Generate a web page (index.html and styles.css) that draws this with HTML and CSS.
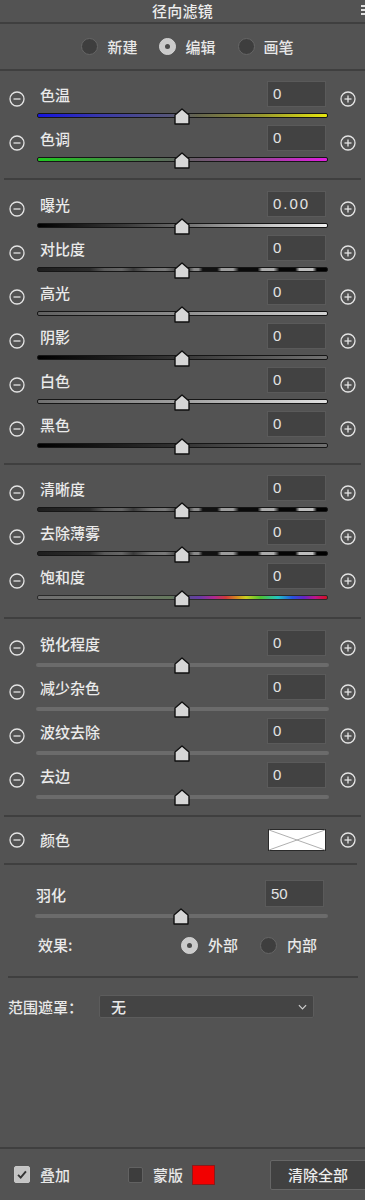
FILE: index.html
```html
<!DOCTYPE html>
<html lang="zh">
<head>
<meta charset="utf-8">
<title>径向滤镜</title>
<link rel="stylesheet" href="styles.css">
</head>
<body>
<div class="panel">
  <header class="titlebar">
    <span class="title">径向滤镜</span>
    <span class="menu"></span>
  </header>

  <div class="modes">
    <label class="radio-item"><span class="radio"></span><span>新建</span></label>
    <label class="radio-item"><span class="radio on"></span><span>编辑</span></label>
    <label class="radio-item"><span class="radio"></span><span>画笔</span></label>
  </div>

  <section class="group g1">
    <div class="row">
      <svg class="pm minus" viewBox="0 0 16 16"><circle cx="8" cy="8" r="7" /><line x1="4.5" y1="8" x2="11.5" y2="8" /></svg>
      <div class="mid">
        <div class="top"><span class="label">色温</span><span class="field">0</span></div>
        <div class="slider"><div class="track t-temp"></div><svg class="thumb" viewBox="0 0 16 17"><path d="M8 1 L15 7 L15 16 L1 16 L1 7 Z" /></svg></div>
      </div>
      <svg class="pm plus" viewBox="0 0 16 16"><circle cx="8" cy="8" r="7" /><line x1="4.5" y1="8" x2="11.5" y2="8" /><line x1="8" y1="4.5" x2="8" y2="11.5" /></svg>
    </div>
    <div class="row">
      <svg class="pm minus" viewBox="0 0 16 16"><circle cx="8" cy="8" r="7" /><line x1="4.5" y1="8" x2="11.5" y2="8" /></svg>
      <div class="mid">
        <div class="top"><span class="label">色调</span><span class="field">0</span></div>
        <div class="slider"><div class="track t-tint"></div><svg class="thumb" viewBox="0 0 16 17"><path d="M8 1 L15 7 L15 16 L1 16 L1 7 Z" /></svg></div>
      </div>
      <svg class="pm plus" viewBox="0 0 16 16"><circle cx="8" cy="8" r="7" /><line x1="4.5" y1="8" x2="11.5" y2="8" /><line x1="8" y1="4.5" x2="8" y2="11.5" /></svg>
    </div>
  </section>

  <section class="group g2">
    <div class="row">
      <svg class="pm minus" viewBox="0 0 16 16"><circle cx="8" cy="8" r="7" /><line x1="4.5" y1="8" x2="11.5" y2="8" /></svg>
      <div class="mid">
        <div class="top"><span class="label">曝光</span><span class="field wide">0.00</span></div>
        <div class="slider"><div class="track t-exp"></div><svg class="thumb" viewBox="0 0 16 17"><path d="M8 1 L15 7 L15 16 L1 16 L1 7 Z" /></svg></div>
      </div>
      <svg class="pm plus" viewBox="0 0 16 16"><circle cx="8" cy="8" r="7" /><line x1="4.5" y1="8" x2="11.5" y2="8" /><line x1="8" y1="4.5" x2="8" y2="11.5" /></svg>
    </div>
    <div class="row">
      <svg class="pm minus" viewBox="0 0 16 16"><circle cx="8" cy="8" r="7" /><line x1="4.5" y1="8" x2="11.5" y2="8" /></svg>
      <div class="mid">
        <div class="top"><span class="label">对比度</span><span class="field">0</span></div>
        <div class="slider"><div class="track t-dash"></div><svg class="thumb" viewBox="0 0 16 17"><path d="M8 1 L15 7 L15 16 L1 16 L1 7 Z" /></svg></div>
      </div>
      <svg class="pm plus" viewBox="0 0 16 16"><circle cx="8" cy="8" r="7" /><line x1="4.5" y1="8" x2="11.5" y2="8" /><line x1="8" y1="4.5" x2="8" y2="11.5" /></svg>
    </div>
    <div class="row">
      <svg class="pm minus" viewBox="0 0 16 16"><circle cx="8" cy="8" r="7" /><line x1="4.5" y1="8" x2="11.5" y2="8" /></svg>
      <div class="mid">
        <div class="top"><span class="label">高光</span><span class="field">0</span></div>
        <div class="slider"><div class="track t-high"></div><svg class="thumb" viewBox="0 0 16 17"><path d="M8 1 L15 7 L15 16 L1 16 L1 7 Z" /></svg></div>
      </div>
      <svg class="pm plus" viewBox="0 0 16 16"><circle cx="8" cy="8" r="7" /><line x1="4.5" y1="8" x2="11.5" y2="8" /><line x1="8" y1="4.5" x2="8" y2="11.5" /></svg>
    </div>
    <div class="row">
      <svg class="pm minus" viewBox="0 0 16 16"><circle cx="8" cy="8" r="7" /><line x1="4.5" y1="8" x2="11.5" y2="8" /></svg>
      <div class="mid">
        <div class="top"><span class="label">阴影</span><span class="field">0</span></div>
        <div class="slider"><div class="track t-shadow"></div><svg class="thumb" viewBox="0 0 16 17"><path d="M8 1 L15 7 L15 16 L1 16 L1 7 Z" /></svg></div>
      </div>
      <svg class="pm plus" viewBox="0 0 16 16"><circle cx="8" cy="8" r="7" /><line x1="4.5" y1="8" x2="11.5" y2="8" /><line x1="8" y1="4.5" x2="8" y2="11.5" /></svg>
    </div>
    <div class="row">
      <svg class="pm minus" viewBox="0 0 16 16"><circle cx="8" cy="8" r="7" /><line x1="4.5" y1="8" x2="11.5" y2="8" /></svg>
      <div class="mid">
        <div class="top"><span class="label">白色</span><span class="field">0</span></div>
        <div class="slider"><div class="track t-white"></div><svg class="thumb" viewBox="0 0 16 17"><path d="M8 1 L15 7 L15 16 L1 16 L1 7 Z" /></svg></div>
      </div>
      <svg class="pm plus" viewBox="0 0 16 16"><circle cx="8" cy="8" r="7" /><line x1="4.5" y1="8" x2="11.5" y2="8" /><line x1="8" y1="4.5" x2="8" y2="11.5" /></svg>
    </div>
    <div class="row">
      <svg class="pm minus" viewBox="0 0 16 16"><circle cx="8" cy="8" r="7" /><line x1="4.5" y1="8" x2="11.5" y2="8" /></svg>
      <div class="mid">
        <div class="top"><span class="label">黑色</span><span class="field">0</span></div>
        <div class="slider"><div class="track t-black"></div><svg class="thumb" viewBox="0 0 16 17"><path d="M8 1 L15 7 L15 16 L1 16 L1 7 Z" /></svg></div>
      </div>
      <svg class="pm plus" viewBox="0 0 16 16"><circle cx="8" cy="8" r="7" /><line x1="4.5" y1="8" x2="11.5" y2="8" /><line x1="8" y1="4.5" x2="8" y2="11.5" /></svg>
    </div>
  </section>

  <section class="group g3">
    <div class="row">
      <svg class="pm minus" viewBox="0 0 16 16"><circle cx="8" cy="8" r="7" /><line x1="4.5" y1="8" x2="11.5" y2="8" /></svg>
      <div class="mid">
        <div class="top"><span class="label">清晰度</span><span class="field">0</span></div>
        <div class="slider"><div class="track t-dash"></div><svg class="thumb" viewBox="0 0 16 17"><path d="M8 1 L15 7 L15 16 L1 16 L1 7 Z" /></svg></div>
      </div>
      <svg class="pm plus" viewBox="0 0 16 16"><circle cx="8" cy="8" r="7" /><line x1="4.5" y1="8" x2="11.5" y2="8" /><line x1="8" y1="4.5" x2="8" y2="11.5" /></svg>
    </div>
    <div class="row">
      <svg class="pm minus" viewBox="0 0 16 16"><circle cx="8" cy="8" r="7" /><line x1="4.5" y1="8" x2="11.5" y2="8" /></svg>
      <div class="mid">
        <div class="top"><span class="label">去除薄雾</span><span class="field">0</span></div>
        <div class="slider"><div class="track t-dash"></div><svg class="thumb" viewBox="0 0 16 17"><path d="M8 1 L15 7 L15 16 L1 16 L1 7 Z" /></svg></div>
      </div>
      <svg class="pm plus" viewBox="0 0 16 16"><circle cx="8" cy="8" r="7" /><line x1="4.5" y1="8" x2="11.5" y2="8" /><line x1="8" y1="4.5" x2="8" y2="11.5" /></svg>
    </div>
    <div class="row">
      <svg class="pm minus" viewBox="0 0 16 16"><circle cx="8" cy="8" r="7" /><line x1="4.5" y1="8" x2="11.5" y2="8" /></svg>
      <div class="mid">
        <div class="top"><span class="label">饱和度</span><span class="field">0</span></div>
        <div class="slider"><div class="track t-sat"></div><svg class="thumb" viewBox="0 0 16 17"><path d="M8 1 L15 7 L15 16 L1 16 L1 7 Z" /></svg></div>
      </div>
      <svg class="pm plus" viewBox="0 0 16 16"><circle cx="8" cy="8" r="7" /><line x1="4.5" y1="8" x2="11.5" y2="8" /><line x1="8" y1="4.5" x2="8" y2="11.5" /></svg>
    </div>
  </section>

  <section class="group g4">
    <div class="row">
      <svg class="pm minus" viewBox="0 0 16 16"><circle cx="8" cy="8" r="7" /><line x1="4.5" y1="8" x2="11.5" y2="8" /></svg>
      <div class="mid">
        <div class="top"><span class="label">锐化程度</span><span class="field">0</span></div>
        <div class="slider"><div class="track plain"></div><svg class="thumb" viewBox="0 0 16 17"><path d="M8 1 L15 7 L15 16 L1 16 L1 7 Z" /></svg></div>
      </div>
      <svg class="pm plus" viewBox="0 0 16 16"><circle cx="8" cy="8" r="7" /><line x1="4.5" y1="8" x2="11.5" y2="8" /><line x1="8" y1="4.5" x2="8" y2="11.5" /></svg>
    </div>
    <div class="row">
      <svg class="pm minus" viewBox="0 0 16 16"><circle cx="8" cy="8" r="7" /><line x1="4.5" y1="8" x2="11.5" y2="8" /></svg>
      <div class="mid">
        <div class="top"><span class="label">减少杂色</span><span class="field">0</span></div>
        <div class="slider"><div class="track plain"></div><svg class="thumb" viewBox="0 0 16 17"><path d="M8 1 L15 7 L15 16 L1 16 L1 7 Z" /></svg></div>
      </div>
      <svg class="pm plus" viewBox="0 0 16 16"><circle cx="8" cy="8" r="7" /><line x1="4.5" y1="8" x2="11.5" y2="8" /><line x1="8" y1="4.5" x2="8" y2="11.5" /></svg>
    </div>
    <div class="row">
      <svg class="pm minus" viewBox="0 0 16 16"><circle cx="8" cy="8" r="7" /><line x1="4.5" y1="8" x2="11.5" y2="8" /></svg>
      <div class="mid">
        <div class="top"><span class="label">波纹去除</span><span class="field">0</span></div>
        <div class="slider"><div class="track plain"></div><svg class="thumb" viewBox="0 0 16 17"><path d="M8 1 L15 7 L15 16 L1 16 L1 7 Z" /></svg></div>
      </div>
      <svg class="pm plus" viewBox="0 0 16 16"><circle cx="8" cy="8" r="7" /><line x1="4.5" y1="8" x2="11.5" y2="8" /><line x1="8" y1="4.5" x2="8" y2="11.5" /></svg>
    </div>
    <div class="row">
      <svg class="pm minus" viewBox="0 0 16 16"><circle cx="8" cy="8" r="7" /><line x1="4.5" y1="8" x2="11.5" y2="8" /></svg>
      <div class="mid">
        <div class="top"><span class="label">去边</span><span class="field">0</span></div>
        <div class="slider"><div class="track plain"></div><svg class="thumb" viewBox="0 0 16 17"><path d="M8 1 L15 7 L15 16 L1 16 L1 7 Z" /></svg></div>
      </div>
      <svg class="pm plus" viewBox="0 0 16 16"><circle cx="8" cy="8" r="7" /><line x1="4.5" y1="8" x2="11.5" y2="8" /><line x1="8" y1="4.5" x2="8" y2="11.5" /></svg>
    </div>
  </section>

  <section class="color-row">
    <svg class="pm minus" viewBox="0 0 16 16"><circle cx="8" cy="8" r="7" /><line x1="4.5" y1="8" x2="11.5" y2="8" /></svg>
    <div class="mid color-mid">
      <span class="label">颜色</span>
      <svg class="swatch" viewBox="0 0 58 22" preserveAspectRatio="none"><rect x="0.5" y="0.5" width="57" height="21" /><line x1="1" y1="1" x2="57" y2="21" /><line x1="1" y1="21" x2="57" y2="1" /></svg>
    </div>
    <svg class="pm plus" viewBox="0 0 16 16"><circle cx="8" cy="8" r="7" /><line x1="4.5" y1="8" x2="11.5" y2="8" /><line x1="8" y1="4.5" x2="8" y2="11.5" /></svg>
  </section>

  <section class="feather">
    <div class="top ftop"><span class="label">羽化</span><span class="field">50</span></div>
    <div class="slider fslider"><div class="track plain"></div><svg class="thumb" viewBox="0 0 16 17"><path d="M8 1 L15 7 L15 16 L1 16 L1 7 Z" /></svg></div>
    <div class="effect">
      <span class="label">效果:</span>
      <div class="effect-opts">
        <label class="radio-item"><span class="radio on"></span><span>外部</span></label>
        <label class="radio-item"><span class="radio"></span><span>内部</span></label>
      </div>
    </div>
  </section>

  <section class="range">
    <span class="range-label">范围遮罩：</span>
    <div class="select">
      <span>无</span>
      <svg class="chev" viewBox="0 0 10 6"><path d="M1 1 L5 5 L9 1" /></svg>
    </div>
  </section>

  <div class="spacer"></div>

  <footer class="bottom">
    <label class="check-item"><span class="check on"><svg viewBox="0 0 16 16"><path d="M3.5 8.5 L6.5 11.5 L12.5 4.5" /></svg></span><span class="check-text">叠加</span></label>
    <label class="check-item mask"><span class="check"></span><span class="check-text">蒙版</span></label>
    <span class="red"></span>
    <button class="clear">清除全部</button>
  </footer>
</div>
</body>
</html>
```

FILE: styles.css
```css
* { box-sizing: border-box; }

html, body {
  margin: 0;
  padding: 0;
  background: #535353;
}

body {
  font-family: "Noto Sans CJK SC", "Liberation Sans", sans-serif;
  font-size: 15px;
  font-weight: 500;
  color: #e8e8e8;
}

.panel {
  width: 365px;
  height: 1200px;
  display: flex;
  flex-direction: column;
  overflow: hidden;
  background: #535353;
}

/* title bar */
.titlebar {
  position: relative;
  height: 24px;
  border-bottom: 2px solid #3f3f3f;
  display: flex;
  justify-content: center;
  align-items: center;
}
.title {
  font-size: 15px;
  font-weight: 500;
  line-height: 22px;
  color: #ececec;
  letter-spacing: 0.2px;
}
.menu {
  position: absolute;
  right: 0;
  top: 5px;
  width: 4px;
  height: 2px;
  background: #e0e0e0;
  box-shadow: 0 4px 0 #e0e0e0, 0 8px 0 #e0e0e0;
}

/* modes */
.modes {
  height: 47px;
  border-bottom: 2px solid #3f3f3f;
  display: flex;
  justify-content: center;
  align-items: center;
  gap: 22px;
  padding-left: 10px;
}
.radio-item {
  display: flex;
  align-items: center;
  gap: 9px;
  line-height: 20px;
  white-space: nowrap;
}
.radio {
  width: 17px;
  height: 17px;
  border-radius: 50%;
  background: #3e3e3e;
  border: 1px solid #666;
  display: inline-block;
  position: relative;
  flex-shrink: 0;
}
.radio.on {
  background: #cbcbcb;
  border-color: #d4d4d4;
}
.radio.on::after {
  content: "";
  position: absolute;
  left: 5px;
  top: 5px;
  width: 5px;
  height: 5px;
  border-radius: 50%;
  background: #4a4a4a;
}

/* groups */
.group {
  margin: 0 4px;
  border-bottom: 2px solid #3f3f3f;
}
.g1 { padding: 10px 0 9px; }
.g2 { padding: 11px 0 8px; }
.g3 { padding: 10px 0 10px; }
.g4 { padding: 11px 0 9px; }

.row {
  display: grid;
  grid-template-columns: 33px 291px 33px;
  height: 44px;
}

.pm {
  width: 16px;
  height: 16px;
  fill: none;
  stroke: #e4e4e4;
  stroke-width: 1.3;
  align-self: start;
  margin-top: 10px;
}
.pm.minus { margin-left: 5px; }
.pm.plus { margin-left: 12px; }

.mid {
  display: flex;
  flex-direction: column;
}
.top {
  height: 26px;
  display: flex;
  justify-content: space-between;
  align-items: center;
}
.label {
  padding-left: 3px;
  padding-top: 2px;
  line-height: 20px;
  color: #eaeaea;
  white-space: nowrap;
}
.field {
  width: 59px;
  height: 26px;
  margin-right: 2px;
  background: #424242;
  border: 1px solid #5a5a5a;
  font-family: "Liberation Sans", sans-serif;
  font-weight: 400;
  font-size: 15px;
  line-height: 24px;
  padding-left: 5px;
  color: #e4e4e4;
}
.field.wide { letter-spacing: 2px; }

.slider {
  position: relative;
  height: 18px;
}
.track {
  margin-top: 6px;
  height: 5px;
  border: 1px solid #161616;
  border-radius: 2px;
}
.track.plain {
  margin: 7px -1px 0;
  height: 4px;
  border: none;
  border-radius: 2px;
  background: #6b6b6b;
}
.thumb {
  position: absolute;
  left: calc(50% - 9px);
  top: 1px;
  width: 16px;
  height: 17px;
  fill: #d6d6d6;
  stroke: #111;
  stroke-width: 1.4;
  stroke-linejoin: round;
}

.t-temp { background: linear-gradient(90deg, #1414e0 0%, #3a3aa8 22%, #55557a 45%, #64644e 55%, #9a9a2e 78%, #e6e60e 100%); }
.t-tint { background: linear-gradient(90deg, #20c820 0%, #3a9a3a 22%, #5a6a5a 45%, #6a5a6a 55%, #a040a0 78%, #e01ee0 100%); }
.t-exp { background: linear-gradient(90deg, #000 0%, #3a3a3a 30%, #7a7a7a 55%, #c4c4c4 80%, #f0f0f0 100%); }
.t-high { background: linear-gradient(90deg, #606060 0%, #8e8e8e 50%, #d2d2d2 100%); }
.t-shadow { background: linear-gradient(90deg, #000 0%, #383838 50%, #727272 100%); }
.t-white { background: linear-gradient(90deg, #707070 0%, #a0a0a0 50%, #e0e0e0 100%); }
.t-black { background: linear-gradient(90deg, #000 0%, #333 50%, #707070 100%); }
.t-dash {
  background: linear-gradient(90deg,
    #1e1e1e 0%, #2c2c2c 18%, #5a5a5a 23%, #666 29%, #3a3a3a 33%,
    #6e6e6e 39%, #7a7a7a 44%, #444 48%, #333 52%,
    #8a8a8a 54%, #8a8a8a 55.5%, #111 57%, #111 62%,
    #9c9c9c 63.5%, #9c9c9c 67.5%, #0a0a0a 69.5%, #0a0a0a 76%,
    #acacac 77.5%, #acacac 81.5%, #050505 83.5%, #050505 89%,
    #bdbdbd 90.5%, #bdbdbd 95%, #000 96.5%, #000 100%);
}
.t-sat {
  border-color: #2a2a2a;
  background: linear-gradient(90deg,
    #707070 0%, #6e726a 30%, #64785c 46%, #5a4a90 52%, #6a3aa6 56%,
    #b02890 61%, #d03a3a 65%, #d4901e 69%, #cad020 72%, #4ec232 77%,
    #22c4c4 83%, #2454e0 88%, #6424c4 92%, #c01488 96%, #d41020 100%);
}

/* color row */
.color-row {
  display: grid;
  grid-template-columns: 33px 291px 33px;
  height: 48px;
  margin: 0 8px 0 4px;
  border-bottom: 2px solid #3f3f3f;
  align-items: center;
}
.color-row .pm { align-self: center; margin-top: 0; }
.color-mid {
  flex-direction: row;
  justify-content: space-between;
  align-items: center;
}
.color-mid .label { padding-top: 0; }
.swatch {
  width: 58px;
  height: 22px;
  margin-right: 2px;
  fill: #fff;
  stroke: #9a9a9a;
  stroke-width: 0.8;
}
.swatch rect { stroke: #2a2a2a; stroke-width: 1; }

/* feather */
.feather {
  margin: 0 7px 0 8px;
  padding: 15px 0 11px 27px;
  border-bottom: 2px solid #3f3f3f;
  display: flex;
  flex-direction: column;
}
.ftop {
  height: 27px;
  width: 293px;
}
.ftop .label { padding-left: 1px; }
.ftop .field { height: 27px; margin-right: 4px; line-height: 25px; }
.fslider { width: 293px; }
.fslider .track.plain { margin: 7px 0 0; }
.fslider .thumb { left: calc(50% - 9px); }
.effect {
  height: 40px;
  display: flex;
  align-items: center;
}
.effect .label { padding-left: 3px; padding-top: 0; width: 146px; }
.effect-opts {
  display: flex;
  gap: 22px;
}
.effect-opts .radio-item { gap: 10px; }

/* range mask */
.range {
  padding: 17px 0 0 8px;
  display: flex;
  align-items: center;
}
.range-label {
  width: 91px;
  line-height: 23px;
  white-space: nowrap;
}
.select {
  width: 215px;
  height: 23px;
  background: #444;
  border: 1px solid #5c5c5c;
  border-radius: 2px;
  display: flex;
  justify-content: space-between;
  align-items: center;
  padding: 0 6px 0 11px;
}
.chev {
  width: 9px;
  height: 6px;
  fill: none;
  stroke: #cfcfcf;
  stroke-width: 1.3;
}

.spacer { flex: 1; }

/* bottom bar */
.bottom {
  height: 53px;
  border-top: 2px solid #3f3f3f;
  display: flex;
  align-items: center;
  padding-left: 14px;
}
.bottom > * { flex-shrink: 0; }
.check-item {
  display: flex;
  align-items: center;
  gap: 10px;
}
.check-text { white-space: nowrap; line-height: 20px; }
.check {
  width: 16px;
  height: 17px;
  border-radius: 2px;
  background: #3d3d3d;
  border: 1px solid #626262;
  display: inline-flex;
  flex-shrink: 0;
}
.check.on {
  background: #c4c4c4;
  border-color: #c8c8c8;
}
.check svg {
  width: 14px;
  height: 15px;
  fill: none;
  stroke: #333;
  stroke-width: 2.2;
}
.mask { margin-left: 58px; }
.mask .check { width: 15px; height: 16px; }
.red {
  width: 23px;
  height: 20px;
  margin-left: 9px;
  background: #f20000;
  border: 1px solid #8a1a1a;
}
.clear {
  margin-left: 55px;
  width: 100px;
  height: 30px;
  background: #414141;
  border: 1px solid #666;
  border-radius: 2px;
  color: #ececec;
  font-family: "Noto Sans CJK SC", sans-serif;
  font-weight: 500;
  font-size: 15px;
  text-align: left;
  padding: 0 0 0 17px;
  white-space: nowrap;
}
```
